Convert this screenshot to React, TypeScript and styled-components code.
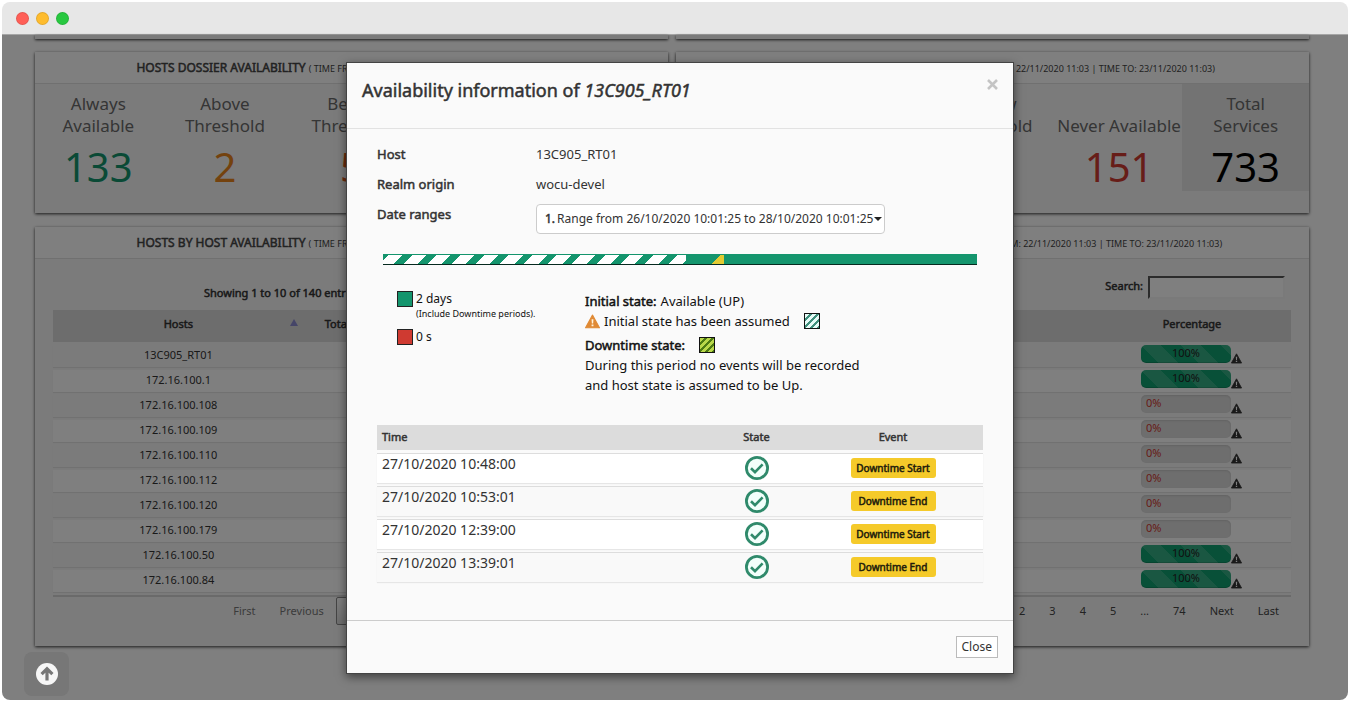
import React from "react";
import styled, { createGlobalStyle, css } from "styled-components";

const GREEN = "#14956d";
const RED = "#cf3a31";

const GlobalStyle = createGlobalStyle`
  *, *::before, *::after { box-sizing: border-box; }
  body {
    margin: 0;
    padding: 2px;
    background: #fff;
    color: #333;
    font-family: "Noto Sans", "Open Sans", sans-serif;
    font-size: 11px;
    line-height: 16px;
  }
  h1, h2, p, dl, dd, ul { margin: 0; padding: 0; }
  ul { list-style: none; }
  button, input, select { font: inherit; color: inherit; }
  a { color: inherit; text-decoration: none; }
`;

const heavy = css`
  font-weight: 400;
  -webkit-text-stroke: 0.5px currentColor;
`;

const Strong = styled.strong`
  ${heavy}
`;

/* ---------- window ---------- */

const Window = styled.div`
  display: flex;
  flex-direction: column;
  min-height: calc(100vh - 4px);
  border-radius: 8px;
  overflow: hidden;
`;

const TitleBar = styled.div`
  display: flex;
  align-items: center;
  gap: 7px;
  height: 33px;
  padding: 1px 14px 0;
  background: #e7e7e7;
  border-bottom: 1px solid #a6a6a6;
`;

const Dot = styled.span<{ $color: string }>`
  width: 13px;
  height: 13px;
  border-radius: 50%;
  background: ${(p) => p.$color};
  border: 1px solid rgba(0, 0, 0, 0.1);
`;

const Viewport = styled.div`
  position: relative;
  flex: 1;
`;

const Dashboard = styled.main`
  display: grid;
  grid-template-columns: 1fr 1fr;
  column-gap: 8px;
  row-gap: 14px;
  padding: 0 39px 54px 33px;
`;

const Panel = styled.section`
  background: #f7f7f7;
  box-shadow: 0 1px 3px rgba(0, 0, 0, 0.8);
`;

const PanelTail = styled(Panel)`
  height: 4px;
  margin-bottom: -1px;
`;

const PanelHeader = styled.h2`
  ${heavy}
  height: 32px;
  border-bottom: 1px solid #e0e0e0;
  background: #fff;
  font-size: 12px;
  line-height: 31px;
  text-align: center;
  color: #444;
  white-space: nowrap;
`;

const Period = styled.small`
  font-size: 9px;
  -webkit-text-stroke: 0;
`;

/* ---------- dossier counters ---------- */

const Counters = styled.div`
  display: grid;
  grid-template-columns: repeat(5, 1fr);
  height: 129px;
  align-items: start;
`;

const Counter = styled.div<{ $shaded?: boolean }>`
  display: flex;
  flex-direction: column;
  align-items: center;
  height: 107px;
  padding-top: 9px;
  background: ${(p) => (p.$shaded ? "#e6e6e6" : "transparent")};
`;

const CounterLabel = styled.span`
  display: flex;
  align-items: flex-end;
  justify-content: center;
  height: 44px;
  font-size: 17px;
  line-height: 22px;
  text-align: center;
  white-space: nowrap;
  color: #6a6a6a;
`;

const CounterValue = styled.span<{ $color: string }>`
  margin-top: 10px;
  font-size: 40px;
  line-height: 40px;
  color: ${(p) => p.$color};
`;

/* ---------- availability lists ---------- */

const ListBody = styled.div`
  padding: 16px 18px 21px;
`;

const Toolbar = styled.div`
  display: flex;
  justify-content: space-between;
  height: 35px;
  padding: 0 6px 0 151px;
`;

const Info = styled.span`
  ${heavy}
  padding-top: 10px;
`;

const Search = styled.label`
  ${heavy}
  display: flex;
  align-items: flex-start;
  gap: 5px;
  padding-top: 1px;
  line-height: 20px;
`;

const SearchInput = styled.input`
  width: 137px;
  height: 23px;
  padding: 0 4px;
  border: 2px inset #ddd;
  border-color: #aaa #f4f4f4 #f4f4f4 #aaa;
  background: #fff;
`;

const List = styled.table`
  width: 100%;
  table-layout: fixed;
  border-collapse: separate;
  border-spacing: 0 3px;
  margin: -3px 0 0;
  border-bottom: 2px solid #d4d4d4;
  text-align: center;
`;

const ListHead = styled.th`
  ${heavy}
  position: relative;
  height: 32px;
  padding: 0 0 4px;
  background: #dadada;
  text-align: center;
`;

const SortMark = styled.svg`
  position: absolute;
  right: 6px;
  top: 9px;
`;

const ListRow = styled.tr`
  background: #f7f7f7;
  box-shadow: 0 1px 1px rgba(0, 0, 0, 0.08);
  &:nth-child(even) { background: #fff; }
`;

const ListCell = styled.td`
  height: 22px;
  padding: 0 0 2px;
  line-height: 18px;
`;

const GaugeCell = styled(ListCell)`
  padding: 0;
`;

const Gauge = styled.div`
  display: flex;
  align-items: flex-end;
  height: 22px;
  padding: 0 0 3px 48px;
`;

const GaugeTrack = styled.div<{ $full: boolean }>`
  width: 90px;
  height: 18px;
  margin-bottom: 1px;
  padding: 0 5px;
  border-radius: 5px;
  line-height: 16px;
  text-align: ${(p) => (p.$full ? "center" : "left")};
  color: ${(p) => (p.$full ? "#222" : RED)};
  background-color: ${(p) => (p.$full ? "#10a070" : "#dcdcdc")};
  background-size: 40px 40px;
  background-image: ${(p) =>
    p.$full
      ? "linear-gradient(45deg, rgba(255,255,255,.15) 25%, transparent 25%, transparent 50%, rgba(255,255,255,.15) 50%, rgba(255,255,255,.15) 75%, transparent 75%, transparent)"
      : "none"};
  box-shadow: ${(p) =>
    p.$full ? "inset 0 -1px 0 rgba(0,0,0,.15)" : "inset 0 1px 2px rgba(0,0,0,.1)"};
`;

const Pager = styled.ul`
  display: flex;
  justify-content: flex-end;
  padding-right: 12px;
  gap: 24px;
  line-height: 28px;
`;

const PagerLink = styled.a<{ $tone?: "off" | "current" }>`
  display: block;
  color: ${(p) => (p.$tone === "off" ? "#777" : "#444")};
  ${(p) =>
    p.$tone === "current" &&
    css`
      margin: 0 -12px;
      padding: 0 11px;
      line-height: 26px;
      border: 1px solid #888;
      border-radius: 2px;
      background: linear-gradient(#fff, #dcdcdc);
    `}
`;

const UpButton = styled.button`
  position: absolute;
  left: 22px;
  bottom: 4px;
  z-index: 3;
  display: flex;
  align-items: center;
  justify-content: center;
  width: 45px;
  height: 44px;
  padding: 0;
  border: 0;
  border-radius: 8px;
  background: #777;
`;

/* ---------- modal ---------- */

const Backdrop = styled.div`
  position: absolute;
  inset: 0;
  z-index: 2;
  display: flex;
  align-items: flex-start;
  justify-content: center;
  padding: 27px 0 0 10px;
  background: rgba(0, 0, 0, 0.5);
`;

const Modal = styled.div`
  width: 668px;
  border: 1px solid #444;
  background: #fafafa;
  box-shadow: 0 3px 9px rgba(0, 0, 0, 0.5);
`;

const ModalHeader = styled.header`
  display: flex;
  justify-content: space-between;
  height: 66px;
  padding: 15px;
  border-bottom: 1px solid #e2e2e2;
`;

const ModalTitle = styled.h1`
  ${heavy}
  font-size: 18px;
  line-height: 25px;
`;

const Dismiss = styled.button`
  height: 14px;
  padding: 0;
  border: 0;
  background: none;
`;

const ModalBody = styled.div`
  padding: 15px 30px 35px;
`;

const Facts = styled.dl`
  display: grid;
  grid-template-columns: 159px 1fr;
  font-size: 13px;
  line-height: 20px;
  row-gap: 10px;
`;

const FactName = styled.dt`
  ${heavy}
`;

const RangePicker = styled.div`
  display: inline-flex;
  align-items: center;
  height: 30px;
  padding: 0 2px 0 8px;
  border: 1px solid #ccc;
  border-radius: 4px;
  background: #fff;
  font-size: 12px;
  line-height: 18px;
`;

const RangeSelect = styled.select`
  appearance: none;
  margin-left: 2px;
  padding: 0;
  border: 0;
  background: none;
`;

const Timeline = styled.div`
  display: flex;
  height: 11px;
  margin: 20px 6px 0;
  border-top: 1px solid ${GREEN};
  border-bottom: 1px solid #062a1f;
  background: ${GREEN};
`;

const AssumedSpan = styled.div`
  width: 51%;
  background: repeating-linear-gradient(135deg, ${GREEN} 0 4px, #fff 4px 14px, ${GREEN} 14px 17px);
`;

const DowntimeSpan = styled.div`
  width: 12px;
  margin-left: 26px;
  background: linear-gradient(135deg, ${GREEN} 0 6px, #e2cb32 6px);
`;

const Legend = styled.div`
  display: grid;
  grid-template-columns: 188px 1fr;
  padding: 26px 0 0 20px;
  color: #111;
`;

const Totals = styled.ul`
  display: flex;
  flex-direction: column;
  gap: 8px;
`;

const Total = styled.li`
  display: flex;
  align-items: flex-start;
  gap: 3px;
  font-size: 12px;
  line-height: 16px;
`;

const Swatch = styled.span<{ $color: string }>`
  width: 16px;
  height: 16px;
  border: 1px solid #222;
  background: ${(p) => p.$color};
`;

const Note = styled.small`
  display: block;
  font-size: 9px;
  line-height: 14px;
`;

const States = styled.div`
  font-size: 13px;
  line-height: 20px;
`;

const StateLine = styled.p`
  display: flex;
  align-items: center;
  height: 20px;
  gap: 4px;
`;

const DowntimeLine = styled(StateLine)`
  margin-top: 4px;
`;

const Hatch = styled.span<{ $dark: string; $light: string }>`
  width: 16px;
  height: 16px;
  margin-left: 10px;
  border: 1px solid #111;
  background: repeating-linear-gradient(
    135deg,
    ${(p) => p.$light} 0 3px,
    ${(p) => p.$dark} 3px 5px
  );
`;

const Explanation = styled.p`
  max-width: 300px;
`;

const Events = styled.table`
  width: 100%;
  margin-top: 27px;
  table-layout: fixed;
  border-collapse: separate;
  border-spacing: 0 3px;
`;

const EventHead = styled.th<{ $left?: boolean }>`
  ${heavy}
  height: 25px;
  padding: 0 5px 2px;
  background: #dcdcdc;
  text-align: ${(p) => (p.$left ? "left" : "center")};
`;

const EventRow = styled.tr`
  background: #fff;
  box-shadow: 0 1px 1px rgba(0, 0, 0, 0.08), inset 0 1px 0 #ddd;
  &:nth-child(even) { background: #f9f9f9; }
`;

const EventCell = styled.td`
  height: 30px;
  padding: 0 5px;
  text-align: center;
  vertical-align: middle;
  & > svg { display: block; margin: 0 auto; }
`;

const TimeCell = styled(EventCell)`
  padding-top: 1px;
  font-size: 14px;
  line-height: 20px;
  text-align: left;
  vertical-align: top;
`;

const Tag = styled.span`
  ${heavy}
  display: inline-block;
  width: 85px;
  font-size: 10px;
  line-height: 20px;
  border-radius: 3px;
  background: #f5ca2a;
  color: #221c0c;
`;

const ModalFooter = styled.footer`
  display: flex;
  justify-content: flex-end;
  padding: 15px;
  border-top: 1px solid #ccc;
`;

const CloseButton = styled.button`
  height: 22px;
  padding: 0 5px;
  border: 1px solid #bbb;
  background: #fff;
  font-size: 12px;
  line-height: 18px;
`;

/* ---------- icons ---------- */

const WarningIcon = ({ size, color, mark }: { size: number; color: string; mark: string }) => (
  <svg width={size} height={size} viewBox="0 0 16 16" aria-hidden="true">
    <path d="M8 1.2 15.4 14.6H.6Z" fill={color} stroke={color} strokeWidth="1.2" strokeLinejoin="round" />
    <path d="M7 5.5h2l-.3 4.6H7.3ZM7 11.2h2v1.9H7Z" fill={mark} />
  </svg>
);

const CheckIcon = () => (
  <svg width="24" height="24" viewBox="0 0 24 24" aria-label="Up">
    <circle cx="12" cy="12" r="10.6" fill="#f2fffb" stroke="#2f8a6b" strokeWidth="2.8" />
    <path d="M6 12.2 10 16.1 17.6 8.4" fill="none" stroke="#2f8a6b" strokeWidth="2.6" />
  </svg>
);

/* ---------- data ---------- */

const HOSTS: { name: string; full: boolean; warn: boolean }[] = [
  { name: "13C905_RT01", full: true, warn: true },
  { name: "172.16.100.1", full: true, warn: true },
  { name: "172.16.100.108", full: false, warn: true },
  { name: "172.16.100.109", full: false, warn: true },
  { name: "172.16.100.110", full: false, warn: true },
  { name: "172.16.100.112", full: false, warn: true },
  { name: "172.16.100.120", full: false, warn: false },
  { name: "172.16.100.179", full: false, warn: false },
  { name: "172.16.100.50", full: true, warn: true },
  { name: "172.16.100.84", full: true, warn: true },
];

const EVENTS = [
  ["27/10/2020 10:48:00", "Downtime Start"],
  ["27/10/2020 10:53:01", "Downtime End"],
  ["27/10/2020 12:39:00", "Downtime Start"],
  ["27/10/2020 13:39:01", "Downtime End"],
];

type CounterItem = { label: string[]; value: string; color: string; shaded?: boolean };

const HOST_COUNTERS: CounterItem[] = [
  { label: ["Always", "Available"], value: "133", color: GREEN },
  { label: ["Above", "Threshold"], value: "2", color: "#e8851c" },
  { label: ["Below", "Threshold"], value: "5", color: "#d8571c" },
];

const SERVICE_COUNTERS: CounterItem[] = [
  { label: [], value: "", color: GREEN },
  { label: [], value: "", color: GREEN },
  { label: ["Below", "Threshold"], value: "", color: "#d8571c" },
  { label: ["Never Available"], value: "151", color: RED },
  { label: ["Total", "Services"], value: "733", color: "#000", shaded: true },
];

const Title = ({ children }: { children: string }) => (
  <PanelHeader>
    {children} <Period>( TIME FROM: 22/11/2020 11:03 | TIME TO: 23/11/2020 11:03)</Period>
  </PanelHeader>
);

const CounterRow = ({ items }: { items: CounterItem[] }) => (
  <Counters>
    {items.map((c, i) => (
      <Counter key={i} $shaded={c.shaded}>
        <CounterLabel>
          <span>
            {c.label.map((line, n) => (
              <React.Fragment key={line}>
                {n > 0 && <br />}
                {line}
              </React.Fragment>
            ))}
          </span>
        </CounterLabel>
        <CounterValue $color={c.color}>{c.value}</CounterValue>
      </Counter>
    ))}
  </Counters>
);

const Pagination = ({ last }: { last: string }) => (
  <Pager>
    {["First", "Previous", "1", "2", "3", "4", "5", "...", last, "Next", "Last"].map((p, i) => (
      <li key={p}>
        <PagerLink href="#" $tone={i < 2 ? "off" : i === 2 ? "current" : undefined}>
          {p}
        </PagerLink>
      </li>
    ))}
  </Pager>
);

const ListTools = ({ total, id }: { total: number; id: string }) => (
  <Toolbar>
    <Info>Showing 1 to 10 of {total} entries</Info>
    <Search htmlFor={id}>
      Search: <SearchInput id={id} type="search" />
    </Search>
  </Toolbar>
);

export default function App() {
  return (
    <>
      <GlobalStyle />
      <Window>
        <TitleBar>
          <Dot $color="#ff5f57" />
          <Dot $color="#febc2e" />
          <Dot $color="#28c840" />
        </TitleBar>
        <Viewport>
          <Dashboard>
            <PanelTail />
            <PanelTail />

            <Panel>
              <Title>HOSTS DOSSIER AVAILABILITY</Title>
              <CounterRow items={HOST_COUNTERS} />
            </Panel>
            <Panel>
              <Title>SERVICES DOSSIER AVAILABILITY</Title>
              <CounterRow items={SERVICE_COUNTERS} />
            </Panel>

            <Panel>
              <Title>HOSTS BY HOST AVAILABILITY</Title>
              <ListBody>
                <ListTools total={140} id="host-search" />
                <List>
                  <colgroup>
                    <col style={{ width: "42%" }} />
                    <col style={{ width: "21%" }} />
                    <col />
                  </colgroup>
                  <thead>
                    <tr>
                      <ListHead>
                        Hosts
                        <SortMark width="8" height="7" viewBox="0 0 8 7" aria-hidden="true">
                          <path d="M4 0 8 7H0Z" fill="#8a8ad0" />
                        </SortMark>
                      </ListHead>
                      <ListHead>Total Availability</ListHead>
                      <ListHead />
                    </tr>
                  </thead>
                  <tbody>
                    {HOSTS.map((h) => (
                      <ListRow key={h.name}>
                        <ListCell>{h.name}</ListCell>
                        <ListCell />
                        <ListCell />
                      </ListRow>
                    ))}
                  </tbody>
                </List>
                <Pagination last="14" />
              </ListBody>
            </Panel>
            <Panel>
              <Title>SERVICES BY SERVICE AVAILABILITY</Title>
              <ListBody>
                <ListTools total={733} id="service-search" />
                <List>
                  <colgroup>
                    <col />
                    <col style={{ width: "198px" }} />
                  </colgroup>
                  <thead>
                    <tr>
                      <ListHead>Hosts</ListHead>
                      <ListHead>Percentage</ListHead>
                    </tr>
                  </thead>
                  <tbody>
                    {HOSTS.map((h) => (
                      <ListRow key={h.name}>
                        <ListCell />
                        <GaugeCell>
                          <Gauge>
                            <GaugeTrack $full={h.full}>{h.full ? "100%" : "0%"}</GaugeTrack>
                            {h.warn && <WarningIcon size={11} color="#333" mark="#fff" />}
                          </Gauge>
                        </GaugeCell>
                      </ListRow>
                    ))}
                  </tbody>
                </List>
                <Pagination last="74" />
              </ListBody>
            </Panel>
          </Dashboard>

          <Backdrop>
            <Modal role="dialog" aria-labelledby="modal-title">
              <ModalHeader>
                <ModalTitle id="modal-title">
                  Availability information of <em>13C905_RT01</em>
                </ModalTitle>
                <Dismiss aria-label="Dismiss">
                  <svg width="11" height="11" viewBox="0 0 11 11">
                    <path d="M1 1 10 10M10 1 1 10" stroke="#c4c4c4" strokeWidth="2.6" />
                  </svg>
                </Dismiss>
              </ModalHeader>

              <ModalBody>
                <Facts>
                  <FactName>Host</FactName>
                  <dd>13C905_RT01</dd>
                  <FactName>Realm origin</FactName>
                  <dd>wocu-devel</dd>
                  <FactName>
                    <label htmlFor="range">Date ranges</label>
                  </FactName>
                  <dd>
                    <RangePicker>
                      <Strong>1.</Strong>
                      <RangeSelect id="range" defaultValue="1">
                        <option value="1">
                          Range from 26/10/2020 10:01:25 to 28/10/2020 10:01:25
                        </option>
                      </RangeSelect>
                      <svg width="8" height="4" viewBox="0 0 8 4" aria-hidden="true">
                        <path d="M0 0H8L4 4Z" fill="#222" />
                      </svg>
                    </RangePicker>
                  </dd>
                </Facts>

                <Timeline>
                  <AssumedSpan />
                  <DowntimeSpan />
                </Timeline>

                <Legend>
                  <Totals>
                    <Total>
                      <Swatch $color={GREEN} />
                      <span>
                        2 days
                        <Note>(Include Downtime periods).</Note>
                      </span>
                    </Total>
                    <Total>
                      <Swatch $color={RED} />
                      <span>0 s</span>
                    </Total>
                  </Totals>
                  <States>
                    <StateLine>
                      <Strong>Initial state:</Strong> Available (UP)
                    </StateLine>
                    <StateLine>
                      <WarningIcon size={15} color="#e08a35" mark="#fff3dc" /> Initial state has been
                      assumed
                      <Hatch $dark="#3f8f7c" $light="#e6fbf7" />
                    </StateLine>
                    <DowntimeLine>
                      <Strong>Downtime state:</Strong>
                      <Hatch $dark="#4c7a12" $light="#b9d84a" />
                    </DowntimeLine>
                    <Explanation>
                      During this period no events will be recorded and host state is assumed to be Up.
                    </Explanation>
                  </States>
                </Legend>

                <Events>
                  <colgroup>
                    <col />
                    <col style={{ width: "93px" }} />
                    <col style={{ width: "180px" }} />
                  </colgroup>
                  <thead>
                    <tr>
                      <EventHead $left>Time</EventHead>
                      <EventHead>State</EventHead>
                      <EventHead>Event</EventHead>
                    </tr>
                  </thead>
                  <tbody>
                    {EVENTS.map(([time, event]) => (
                      <EventRow key={time}>
                        <TimeCell>{time}</TimeCell>
                        <EventCell>
                          <CheckIcon />
                        </EventCell>
                        <EventCell>
                          <Tag>{event}</Tag>
                        </EventCell>
                      </EventRow>
                    ))}
                  </tbody>
                </Events>
              </ModalBody>

              <ModalFooter>
                <CloseButton>Close</CloseButton>
              </ModalFooter>
            </Modal>
          </Backdrop>

          <UpButton aria-label="Back to top">
            <svg width="22" height="22" viewBox="0 0 22 22">
              <circle cx="11" cy="11" r="11" fill="#f6f6f6" />
              <path d="M11 17.5V6M5.6 11.2 11 5.8 16.4 11.2" fill="none" stroke="#777" strokeWidth="3.2" />
            </svg>
          </UpButton>
        </Viewport>
      </Window>
    </>
  );
}
